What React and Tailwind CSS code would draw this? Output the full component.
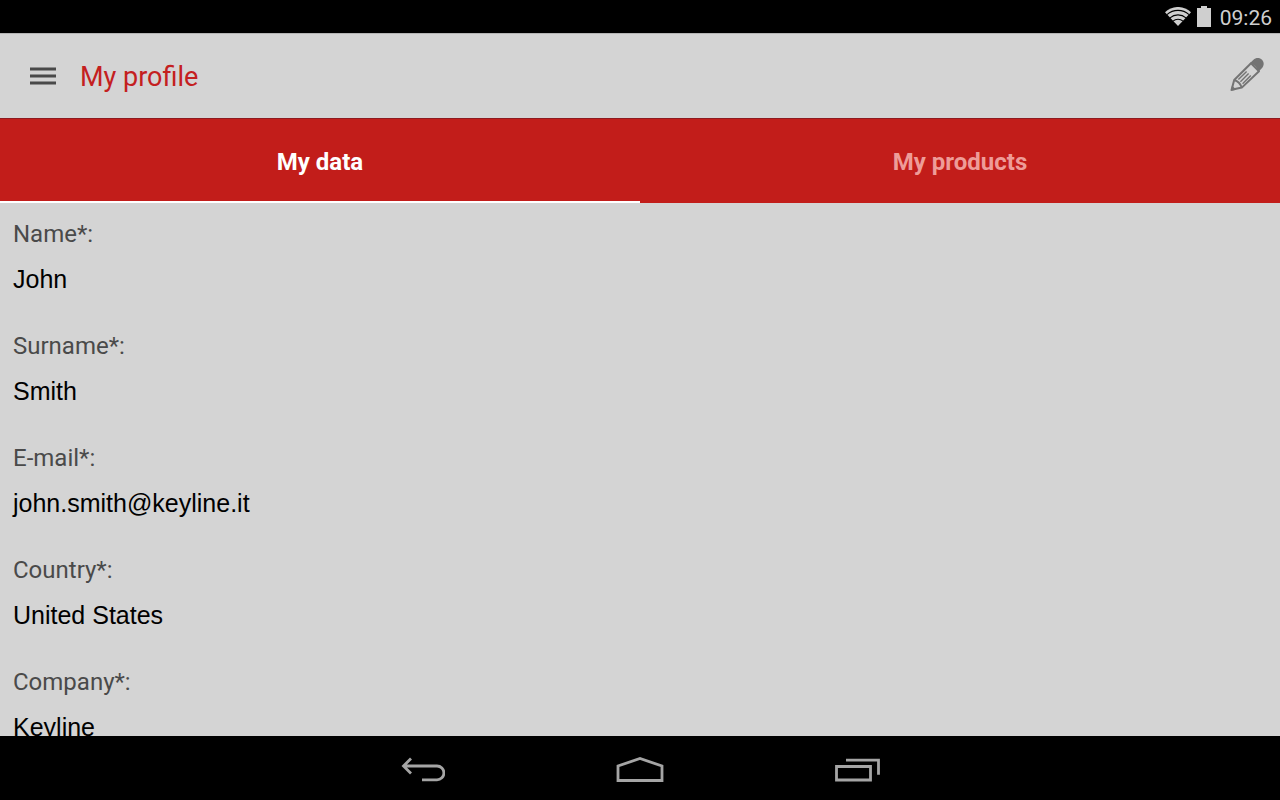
import React, { useState } from "react";

const fields = [
  { label: "Name", value: "John" },
  { label: "Surname", value: "Smith" },
  { label: "E-mail", value: "john.smith@keyline.it" },
  { label: "Country", value: "United States" },
  { label: "Company", value: "Keyline" },
];

const tabs = [
  { id: "data", title: "My data" },
  { id: "products", title: "My products" },
];

const WifiIcon = () => (
  <svg width="26" height="20" viewBox="0 0 26 20" aria-hidden="true">
    <path d="M0 5.3C7.5-1.8 18.5-1.8 26 5.3L13 19z" fill="#cfcfcf" />
    <g fill="none" stroke="#000" strokeWidth="1.1">
      <path d="M2 7.6c6.2-5.6 15.8-5.6 22 0" />
      <path d="M5 10.9c4.6-4 11.4-4 16 0" />
      <path d="M8 14.1c2.8-2.4 7.2-2.4 10 0" />
    </g>
  </svg>
);

const BatteryIcon = () => (
  <svg width="14" height="21" viewBox="0 0 14 21" aria-hidden="true">
    <path d="M4 0h6v2h4v19H0V2h4z" fill="#cfcfcf" />
  </svg>
);

const MenuIcon = () => (
  <svg width="26" height="18" viewBox="0 0 26 18" aria-hidden="true">
    <path d="M0 2h26M0 9h26M0 16h26" stroke="#494949" strokeWidth="2.8" />
  </svg>
);

const PencilIcon = () => (
  <svg width="34" height="34" viewBox="0 0 34 34" aria-hidden="true">
    <g fill="none" stroke="#747474" strokeLinejoin="round">
      <path
        d="M1.6 31.8 4.2 22 21 5.2l8 8L11.8 29.6zM4.2 22q5.6 1.8 7.6 7.6"
        strokeWidth="2"
      />
      <path
        d="M8.4 21.6 16.6 13.4M10.4 23.8 18.6 15.6M12.6 25.8 20.8 17.6"
        strokeWidth="1.4"
      />
    </g>
    <path
      d="m19.6 5.4 3.6-3.4c2.8-2.6 6.4-2.6 8.8-.2 2.4 2.5 2.2 6.1-.4 8.8L28 14.2c-.5-4.8-3.6-8.1-8.4-8.8z"
      fill="#747474"
    />
    <path d="M.6 33l1.5-5.6 4.2 4.3z" fill="#747474" />
  </svg>
);

const BackIcon = () => (
  <svg width="44" height="26" viewBox="0 0 44 26" aria-hidden="true">
    <path
      d="M10 1.5 2.5 9l7.5 7.5M2.5 9H36a6.9 6.9 0 0 1 0 13.8H21"
      fill="none"
      stroke="#a5a5a5"
      strokeWidth="2.8"
    />
  </svg>
);

const HomeIcon = () => (
  <svg width="48" height="26" viewBox="0 0 48 26" aria-hidden="true">
    <path
      d="M2 23.5V9L24 1.5 46 9v14.5z"
      fill="none"
      stroke="#a5a5a5"
      strokeWidth="2.8"
    />
  </svg>
);

const RecentIcon = () => (
  <svg width="46" height="26" viewBox="0 0 46 26" aria-hidden="true">
    <path
      d="M2.5 9.5h34V23h-34zM12 3.2h32.5v14.5"
      fill="none"
      stroke="#a5a5a5"
      strokeWidth="2.8"
    />
  </svg>
);

const App = () => {
  const [active, setActive] = useState("data");

  return (
    <div className="flex h-screen flex-col bg-[#d4d4d4] font-['Roboto',sans-serif]">
      {/* Status bar */}
      <div className="flex h-[33px] shrink-0 items-center justify-end bg-black pr-2 text-[#cfcfcf]">
        <WifiIcon />
        <span className="ml-1.5 mr-[9px]">
          <BatteryIcon />
        </span>
        <time className="pt-0.5 text-[21px] leading-8">09:26</time>
      </div>

      {/* App bar */}
      <header className="flex h-[85px] shrink-0 items-center border-t border-[#b4b4b4] pl-[30px] pr-4">
        <button type="button" aria-label="Menu">
          <MenuIcon />
        </button>
        <h1 className="ml-6 pt-0.5 text-[27px] leading-9 text-[#c4201f]">
          My profile
        </h1>
        <button
          type="button"
          aria-label="Edit profile"
          className="ml-auto pb-0.5"
        >
          <PencilIcon />
        </button>
      </header>

      {/* Tabs */}
      <div
        role="tablist"
        className="grid h-[85px] shrink-0 grid-cols-2 border-t border-[#8e1a20] bg-[#c21d1a]"
      >
        {tabs.map((tab) => (
          <button
            key={tab.id}
            type="button"
            role="tab"
            aria-selected={active === tab.id}
            onClick={() => setActive(tab.id)}
            className={`border-b-2 pt-1 text-2xl font-bold ${
              active === tab.id
                ? "border-white text-white"
                : "border-transparent text-[#ee9c98]"
            }`}
          >
            {tab.title}
          </button>
        ))}
      </div>

      {/* Profile data */}
      <main className="min-h-0 flex-1 overflow-y-auto px-[13px] pt-3 [scrollbar-width:none]">
        {active === "data" && (
          <dl>
            {fields.map((field) => (
              <div key={field.label} className="pb-[22px]">
                <dt className="text-2xl leading-[38px] text-[#4a4a4a]">
                  {field.label}*:
                </dt>
                <dd className="font-['Liberation_Sans',Arial,sans-serif] text-[25px] leading-[52px] text-black">
                  {field.value}
                </dd>
              </div>
            ))}
          </dl>
        )}
      </main>

      {/* System navigation */}
      <nav className="flex h-16 shrink-0 items-center justify-center bg-black pt-1">
        <button
          type="button"
          aria-label="Back"
          className="flex w-[217px] justify-center"
        >
          <BackIcon />
        </button>
        <button
          type="button"
          aria-label="Home"
          className="flex w-[217px] justify-center"
        >
          <HomeIcon />
        </button>
        <button
          type="button"
          aria-label="Recent apps"
          className="flex w-[217px] justify-center"
        >
          <RecentIcon />
        </button>
      </nav>
    </div>
  );
};

export default App;
